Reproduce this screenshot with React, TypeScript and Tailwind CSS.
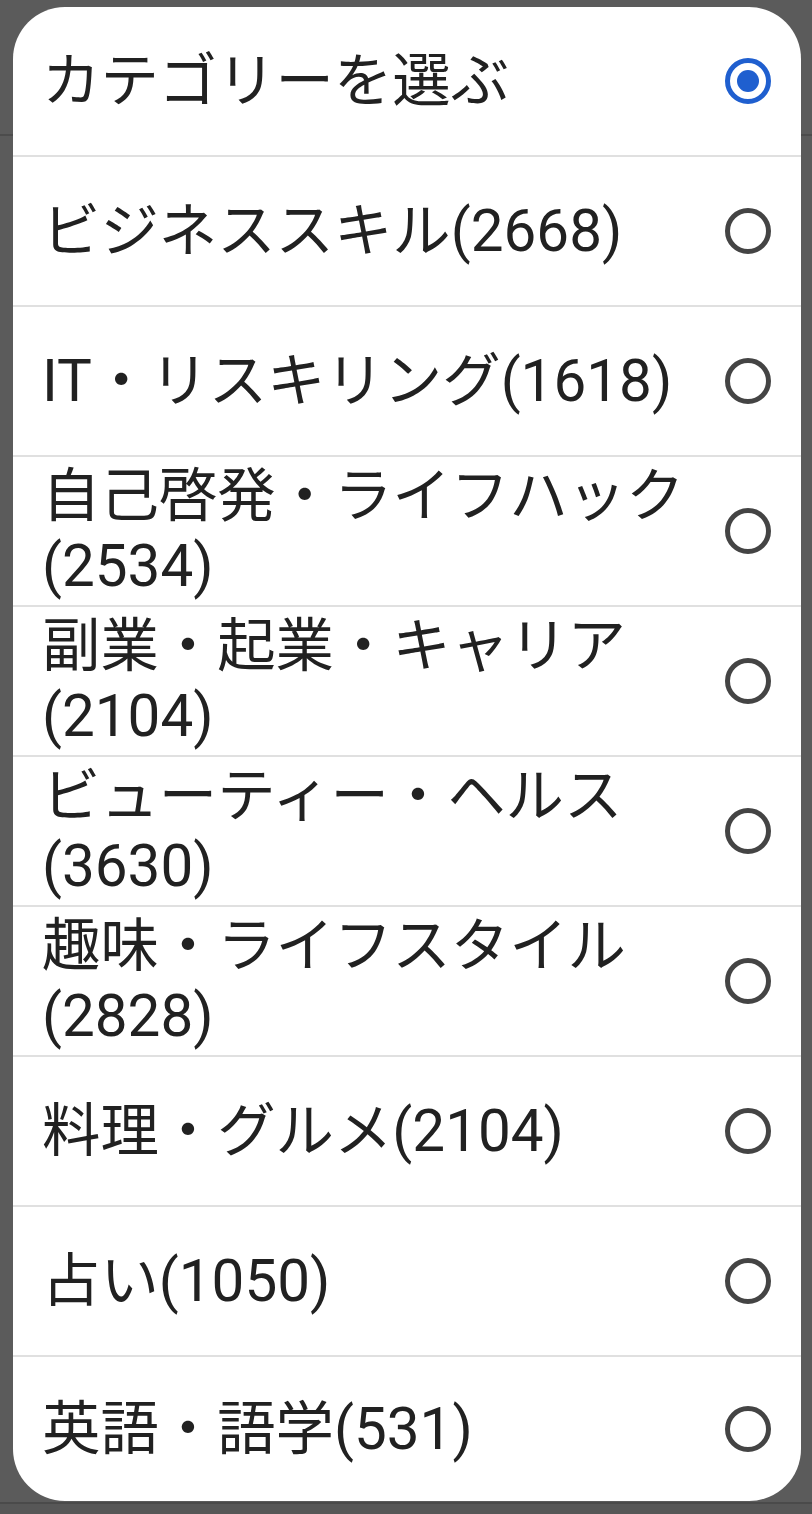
import React from "react";

const categories = [
  "カテゴリーを選ぶ",
  "ビジネススキル(2668)",
  "IT・リスキリング(1618)",
  "自己啓発・ライフハック(2534)",
  "副業・起業・キャリア(2104)",
  "ビューティー・ヘルス(3630)",
  "趣味・ライフスタイル(2828)",
  "料理・グルメ(2104)",
  "占い(1050)",
  "英語・語学(531)",
];

function Radio({ checked }: { checked: boolean }) {
  if (checked) {
    return (
      <span className="flex h-[46px] w-[46px] shrink-0 items-center justify-center rounded-full border-[5px] border-[#1f5fcf]">
        <span className="h-[22px] w-[22px] rounded-full bg-[#1f5fcf]" />
      </span>
    );
  }
  return <span className="h-[46px] w-[46px] shrink-0 rounded-full border-[5px] border-[#444444]" />;
}

export default function App() {
  return (
    <div className="relative h-[1514px] w-[812px] overflow-hidden bg-[#5b5b5b]">
      {/* page behind the dim overlay */}
      <div className="flex h-full flex-col">
        <div className="h-[136px] border-b-2 border-[#4c4c4c]" />
        <div className="flex-1" />
        <div className="h-[12px] border-t-2 border-[#4a4a4a] bg-[#575757]" />
      </div>

      {/* dialog */}
      <div
        className="absolute left-[13px] top-[7px] flex h-[1494px] w-[788px] flex-col overflow-hidden rounded-[52px] bg-white text-[#212121]"
        style={{ fontFamily: "Roboto, 'Noto Sans CJK JP', sans-serif" }}
      >
        {categories.map((label, i) => (
          <div
            key={label}
            className={
              i === categories.length - 1
                ? "flex flex-1 items-center gap-5 pl-[29px] pr-[30px]"
                : "flex h-[150px] shrink-0 items-center gap-5 border-b-2 border-[#e0e0e0] pl-[29px] pr-[30px]"
            }
          >
            <div className="flex-1 text-[58.4px] leading-[70px]">{label}</div>
            <Radio checked={i === 0} />
          </div>
        ))}
      </div>
    </div>
  );
}
